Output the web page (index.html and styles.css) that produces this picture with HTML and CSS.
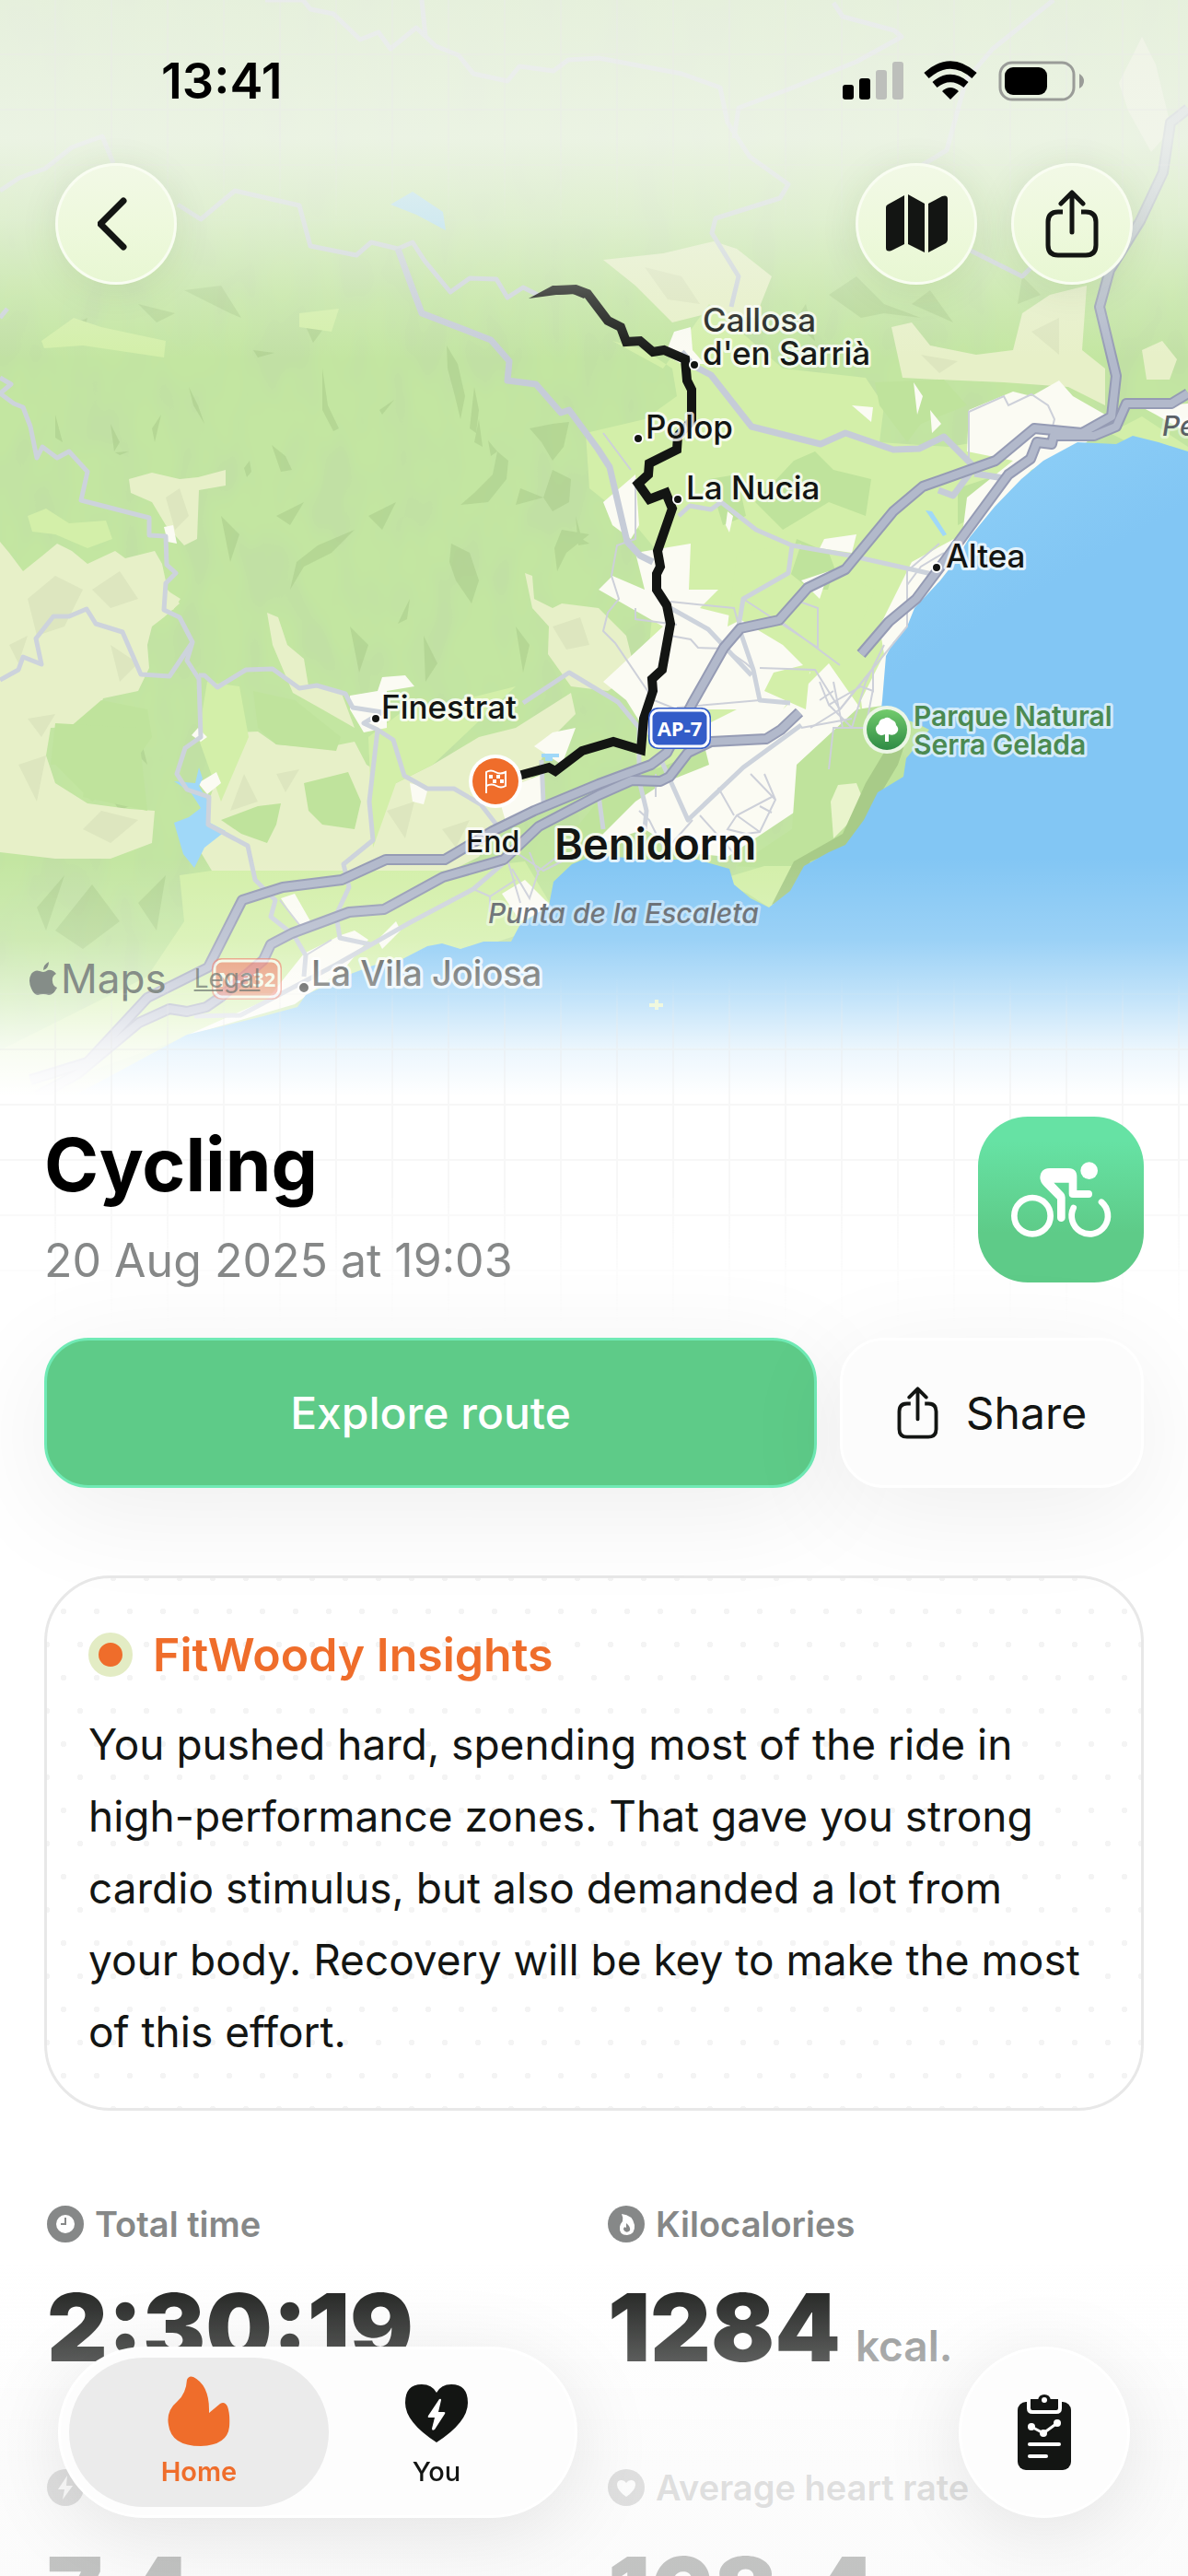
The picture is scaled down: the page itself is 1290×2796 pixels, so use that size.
FILE: index.html
```html
<!DOCTYPE html>
<html lang="en">
<head>
  <meta charset="utf-8">
  <title>Cycling</title>
  <meta name="viewport" content="width=device-width, initial-scale=1.0">
  <link rel="stylesheet" href="styles.css">
</head>
<body>
  <!-- shared icons -->
  <svg class="defs" width="0" height="0" aria-hidden="true">
    <symbol id="i-share" viewBox="0 0 58 74">
      <g fill="none" stroke="currentColor" stroke-width="5" stroke-linecap="round" stroke-linejoin="round">
        <path d="M19 24H14Q3 24 3 35V60Q3 71 14 71H44Q55 71 55 60V35Q55 24 44 24H39" stroke-linecap="butt"/>
        <path d="M29 46V4M17 15L29 3L41 15"/>
      </g>
    </symbol>
    <symbol id="i-bolt" viewBox="0 0 20 36">
      <path d="M13 1L1 19Q0 21 2 21H8L5 33Q5 36 8 34L19 17Q20 15 18 15H12L15 2Q15 0 13 1Z" fill="currentColor"/>
    </symbol>
  </svg>

  <div class="app">
    <header class="map">
      <svg class="map-svg" viewBox="0 0 1290 1200" role="img" aria-label="Map of the route">
        <defs>
          <linearGradient id="sea" x1="0" y1="0" x2="1" y2="1">
            <stop offset="0.1" stop-color="#a3daf9"/>
            <stop offset="0.4" stop-color="#8fd0f7"/>
            <stop offset="0.55" stop-color="#82c6f4"/>
          </linearGradient>
          <linearGradient id="pin" x1="0" y1="0" x2="0" y2="1">
            <stop offset="0" stop-color="#72cb6c"/>
            <stop offset="1" stop-color="#2f8b45"/>
          </linearGradient>
          <filter id="relief" x="0" y="0" width="100%" height="100%">
            <feTurbulence type="fractalNoise" baseFrequency="0.026 0.012" numOctaves="2" seed="8"/>
            <feColorMatrix values="0 0 0 0 0.5  0 0 0 0 0.65  0 0 0 0 0.4  2.4 0 0 0 -0.8"/>
            <feComponentTransfer><feFuncA type="discrete" tableValues="0 0.04 0.08 0.12 0.18 0.24 0.3"/></feComponentTransfer>
          </filter>
        </defs>

        <!-- hills -->
        <rect width="1290" height="1200" fill="#c3e6a1"/>
        <rect width="1290" height="1200" filter="url(#relief)"/>
        <g fill="#a3c584" fill-opacity="0.45">
          <path d="M485 375L497 395L505 430L500 455L494 430L486 400Z"/>
          <path d="M515 420L520 445L517 470L510 465Z M520 455L524 485L515 480Z M530 478L540 490L533 495Z"/>
          <path d="M540 490L552 500L550 520L530 545L500 548L515 535L535 515Z"/>
          <path d="M575 465L600 460L618 458L612 485L600 500L588 480Z"/>
          <path d="M295 483L310 495L317 510L305 512Z M271 500L273 512L268 518L265 508Z"/>
          <path d="M412 445L428 434L415 450Z M350 400L356 440L368 465L362 468L350 445Z"/>
          <path d="M385 575L360 600L330 615L315 640L322 610L345 592Z"/>
          <path d="M440 660L445 650L442 672L432 677Z M205 420L215 440L222 460L210 440Z"/>
          <path d="M490 590L510 600L520 630L512 655L495 630L488 610Z"/>
          <path d="M600 510L620 520L618 545L600 555L590 540Z M565 530L590 540L560 548Z"/>
          <path d="M610 575L640 580L615 600L605 620L602 595Z M625 560L632 585L640 590L628 592Z"/>
          <path d="M165 465L175 450L168 480Z M60 450L68 480L60 475Z M120 460L130 480L124 490Z"/>
          <path d="M275 380L298 383L280 388Z M125 491L140 490L130 494Z"/>
          <path d="M230 330L200 315L240 310L262 345L250 340Z M330 350L360 345L340 372Z"/>
          <path d="M60 360L95 345L90 365Z M150 330L190 340L170 350Z"/>
          <path d="M900 320L930 300L960 330L1000 345L960 340L935 345Z M990 330L1010 315L1035 350Z"/>
          <path d="M815 440L830 400L840 460Z M875 330L885 370L862 350Z M1110 300L1130 320L1105 330Z"/>
          <path d="M60 1010L100 960L130 1000L90 1030Z M40 985L70 950L50 1010Z M150 980L180 950L170 1010Z"/>
          <path d="M110 850L130 835L150 870L130 880Z M130 800L150 790L160 830Z M305 780L340 800L320 815Z"/>
          <path d="M380 680L400 700L390 730Z M460 690L475 720L462 740Z M560 680L575 700L568 730Z"/>
          <path d="M240 560L260 580L250 610Z M300 560L330 545L315 570Z M400 560L430 545L415 575Z"/>
        </g>

        <!-- dry land -->
        <g fill="#e7f0c8">
          <path d="M0 588L10 600L25 620L45 604L62 590L78 598L95 612L125 598L136 606L168 598L176 612L182 640L195 655L178 670L165 680L160 700L162 725L150 750L112 758L100 788L55 790L50 820L60 850L95 872L140 878L168 880L165 915L120 932L60 932L0 925Z"/>
          <path d="M140 520L165 513L195 520L215 518L245 510V527L216 532L214 585L200 592L180 570L165 545L142 535Z"/>
          <path d="M230 860L255 795L280 794L300 808L350 812L385 805L398 830L430 850L470 830L520 800L560 790L620 752L625 775L600 800L580 840L520 930L490 945L400 955L350 960L290 965L230 945L212 915Z"/>
          <path d="M290 665L302 670L312 700L330 715L335 745L370 750L385 790L350 770L318 752L296 700Z"/>
          <path d="M570 622L578 625L580 650L600 660L610 655L650 660L680 690L690 730L660 750L620 745L595 710L596 680L578 660Z"/>
          <path d="M655 282L720 275L775 262L800 270L838 300L820 345L770 340L730 350L690 310Z"/>
          <path d="M968 355L990 350L1010 375L1060 385L1100 380L1110 340L1140 320L1180 310L1175 380L1200 400L1200 440L1160 420L1090 415L1020 412L980 410Z"/>
          <path d="M1240 380L1262 370L1278 390L1270 412L1245 412Z"/>
          <path d="M1240 40L1255 70L1272 140L1250 165L1225 120L1215 90Z"/>
          <path d="M160 650L180 640L196 650L188 662Z"/>
        </g>
        <!-- relief on the dry land -->
        <g fill="#dde6bf">
          <path d="M30 650L60 625L90 640L70 680L40 690Z M100 640L130 620L150 650L120 660Z M10 700L30 690L20 720Z M120 700L150 720L130 740Z"/>
          <path d="M90 900L110 880L150 890L120 915Z M20 830L50 820L40 870Z M30 780L60 775L45 800Z"/>
          <path d="M180 540L195 530L205 560L190 575Z M250 880L265 840L280 870Z M420 880L450 870L440 910Z M300 840L325 835L310 860Z M480 900L510 890L495 920Z"/>
          <path d="M600 680L630 670L640 700L615 705Z M1000 385L1040 392L1020 405Z M1120 360L1150 345L1150 385Z M700 290L740 300L760 330L725 325Z"/>
        </g>
        <g fill="#d3efa9">
          <path d="M45 370L80 345L110 355L180 370L178 388L90 375L48 378Z"/>
          <path d="M325 340L368 335L360 360L325 355Z"/>
          <path d="M30 560L50 552L75 568L115 565L122 585L95 595L60 580L35 577Z"/>
          <path d="M665 370L720 400L770 330L850 400L940 410L960 440L955 480L1030 485L1060 480L1180 470L1110 520L1040 600L970 720L955 780L860 880L780 930L700 850L690 820L705 700L715 600L690 570L640 530L636 470L700 455L735 430L730 400L700 380Z"/>
          <path d="M195 950L230 945L480 945L570 935L600 985L562 1015L500 1035L380 1065L190 1130L90 1165L0 1195V1140L160 1060L200 1000Z"/>
          <path d="M225 740L260 745L270 800L240 870L215 800Z"/>
          <path d="M400 800L440 770L500 760L560 745L470 830L430 850L405 920Z"/>
          <path d="M1205 470L1240 452L1290 485V500L1235 485Z"/>
        </g>
        <!-- woods -->
        <g fill="#bfe39c">
          <path d="M862 500L885 490L905 510L946 520L940 560L900 545L850 575L820 545Z"/>
          <path d="M865 585L900 600L915 640L880 640L855 620Z"/>
          <path d="M950 415L1025 412L1050 440L1000 460L985 480L955 440Z"/>
          <path d="M770 520L800 515L810 560L785 570Z"/>
          <path d="M75 790L110 760L160 770L165 800L130 850L100 870L60 830Z"/>
          <path d="M60 785L150 790L160 880L90 865L95 830L55 830Z"/>
          <path d="M275 750L320 760L370 800L365 815L300 808L280 790Z"/>
          <path d="M240 890L280 875L305 872L300 895L290 915L262 905Z"/>
          <path d="M330 850L378 838L392 870L385 900L350 895L335 880Z"/>
          <path d="M665 850L725 830L790 800L830 840L770 880L700 880L660 940L600 930Z"/>
          <path d="M1040 530L1085 515L1060 560L1040 570Z"/>
        </g>
        <!-- built-up land -->
        <g fill="#fbfbf3">
          <path d="M1052 445L1100 425L1120 430L1150 413L1165 430L1200 450L1180 480L1120 510L1075 560L1040 620L1000 670L975 720L975 780L960 880L940 800L935 760L960 710L955 680L990 610L1045 580L1050 540L1100 500L1050 490Z"/>
          <path d="M690 600L750 590L748 640L780 640L760 660L800 670L850 700L880 730L850 770L820 800L900 720L935 770L950 800L880 870L790 930L740 925L700 900L640 920L690 870L720 850L770 830L760 790L800 770L740 770L705 800L680 760L655 740L720 680L650 640L665 625L700 640Z"/>
          <path d="M655 545L690 515L694 570L685 585L665 570Z"/>
          <path d="M732 360L750 355L752 380L765 395L740 395L722 385Z"/>
          <path d="M925 440L948 442L946 458Z M992 415L1002 430L996 450Z M1010 445L1022 460L1012 470Z"/>
          <path d="M380 755L410 750L415 735L440 733L450 745L420 750L420 790L395 795L380 770Z"/>
          <path d="M215 790L225 800L218 805L208 798Z M215 850L235 838L240 850L225 862Z"/>
          <path d="M445 850L465 855L460 873L448 870Z M540 860L590 840L590 875L550 895Z M580 810L600 795L625 790L610 830Z"/>
          <path d="M305 975L320 970L340 1005L325 1005Z M330 1035L370 1015L385 1010L400 1020L375 1050L320 1090L200 1125L290 1085Z"/>
          <path d="M545 970L570 955L600 985L565 1000Z M410 1020L430 1000L435 1010L415 1030Z"/>
          <path d="M178 572L188 570L192 590L182 588Z"/>
          <path d="M790 555L796 560L792 578L788 570Z M895 585L930 580L925 600L890 595Z M870 630L900 620L890 650Z"/>
          <path d="M1240 442L1290 438V470L1255 450Z"/>
        </g>
        <g fill="#bfe39c">
          <path d="M800 600L870 590L850 650L790 680Z M840 730L880 720L875 770L830 750Z M905 620L950 640L930 690L890 670Z" fill="#d3efa9"/>
          <path d="M865 830L930 770L965 765L975 800L985 830L975 860L950 880L930 930L870 945L800 940L860 900Z"/>
          <path d="M780 955L830 940L870 940L855 970L835 985L812 970Z" fill="#d3efa9"/>
          <path d="M910 852L930 850L938 870L925 890L905 910L902 870Z" fill="#e9f4cc"/>
          <path d="M985 800L975 830L945 880L930 915L880 935L855 975L838 982L862 935L915 905L940 850L970 800Z" fill="#a8cb88"/>
        </g>

        <!-- sea and lakes -->
        <path fill="url(#sea)" d="M1290 490L1258 480L1230 473L1212 482L1170 480L1133 500L1109 520L1080 550L1053 583L1035 612L1021 630L993 660L985 680L970 697L962 712L958 760L956 778L975 778L995 785L1009 792L995 810L984 823L981 843L953 860L938 890L918 917L900 925L873 940L858 967L835 985L815 975L797 960L792 943L757 933L702 933L646 928L621 938L601 957L596 983L565 1003L555 1022L525 1022L500 1030L480 1024L464 1027L435 1042L405 1048L373 1060L332 1080L323 1093L286 1103L245 1113L203 1123L153 1150L116 1170L60 1200H1290Z"/>
        <path d="M705 1089h6v-4h4v4h5v4h-5v3h-4v-3h-6z" fill="#dcefb5"/>
        <path fill="#a0d8f8" d="M216 833L220 845L216 853L226 870L228 893L245 902L222 920L211 942L199 927L189 893L205 887L218 877L207 860L189 848L212 850ZM424 222L448 208L481 230L484 250L452 233ZM1005 554L1012 555L1028 580L1024 582ZM588 818H607V822H600V826H592V822H588Z"/>

        <!-- streets -->
        <g fill="none" stroke="#cdd0d9" stroke-width="2">
          <path d="M1052 500V447L1090 430L1095 440L1120 428L1138 440L1145 455L1140 475"/>
          <path d="M655 470L685 510M690 520V585L670 592L664 625L672 650L660 665L655 685L668 698L710 760L735 770"/>
          <path d="M728 653L797 660L803 682M690 660V672L735 678M728 690L750 694L758 703L788 704M786 703L810 720L818 727M807 650L888 703V660L860 650M846 673L912 722M825 725L885 727L912 770M1020 590L985 620V680L912 770L880 790M1025 600L1000 615L985 635M735 768L825 760M768 770L740 800"/>
          <path d="M890 740L900 765L935 745L948 750V725L912 770M900 765L925 790H940L948 748M905 740L915 790M870 790L925 780M890 760L905 750M960 700L940 740L925 790L905 790L900 835"/>
          <path d="M838 865L800 885L790 900L810 905L825 903L842 868L830 840M815 840L842 868M800 885L825 903M825 875L838 882M760 885L805 935M752 890L730 915M694 880L705 890L720 920M780 855L797 885M712 840V865"/>
          <path d="M551 933L565 980M556 943L575 975L585 945L605 930M560 925L590 945L620 930M575 925L585 950M514 965L532 973L560 955M532 973V990M304 977L330 1010M332 1037L360 1020"/>
        </g>
        <g fill="none" stroke="#cdd3dc" stroke-width="5" stroke-linejoin="round">
          <path d="M8 335L0 345M0 410L12 417L0 427L15 438L25 442L33 463L40 497L46 485L62 497L75 490L95 512L88 543L162 562V581L180 582L181 613L191 622L180 633L178 662L195 670L209 697L203 717L216 737L218 800L201 812L192 840L203 857L227 865L226 895L269 918L277 955L299 977L294 995L319 1015L332 1037L330 1060"/>
          <path d="M0 738L20 727L25 713L45 721L39 693L58 669H75L94 661L104 677L133 686L153 732L184 734L209 697"/>
          <path d="M216 733H222L236 746L267 727L296 726L325 747L344 744L375 753L383 768L415 773L395 785L410 792L427 803L439 842L464 856H493L522 873L539 895"/>
          <path d="M410 792L401 870L405 912L373 938L379 963L365 993L369 1018L402 1025"/>
          <path d="M568 763L618 730L671 762L694 790V847L702 880L700 900"/>
          <path d="M288 0H329L337 10L362 15L391 43L411 35L424 53L452 30L473 50L498 60L514 80L551 88L564 72L601 77L617 65L650 63L740 80L782 95L790 133L814 170L856 200L847 215L777 237L773 253L802 300L794 333M458 0L462 40"/>
          <path d="M0 207L21 193L49 183L78 160L111 148L123 177M193 222L218 238L255 207L325 223L337 267L387 277L403 263L432 270L448 263L461 283L489 317L510 302L539 303L551 323L568 312L584 320"/>
          <path d="M1144 0L1078 53L1049 87L1028 163L1000 180M905 3L915 18L971 33L979 40L930 67L856 97L802 117L797 150M1050 270L1110 300L1120 290"/>
          <path d="M737 560L749 549L772 553L783 545L821 575L860 592L923 603L1012 623M860 592L856 622L807 650L802 680L818 727L825 760L858 763"/>
          <path d="M870 787L807 833L747 890L717 823M728 660L769 683L816 733M588 825L590 870M650 863L655 900"/>
          <path d="M551 933L514 965L444 1002L365 1047L261 1102L211 1103"/>
        </g>
        <g fill="none" stroke="#c6ccd8" stroke-width="7" stroke-linejoin="round">
          <path d="M432 270L443 300L458 340L533 369L553 392L551 413L582 417L609 448L618 445L649 487L662 507L676 567L681 588L695 603L709 610"/>
          <path d="M740 382L753 397L772 407L816 463L891 482L918 470L970 488L998 487L1025 474L1044 493L1058 507L1035 538L1019 532M1058 514L1090 519"/>
        </g>

        <!-- motorways -->
        <g fill="none" stroke="#959bb4" stroke-width="12" stroke-linejoin="round">
          <path id="ap7" d="M33 1172L95 1153L160 1083L226 1050L263 977L307 963L371 955L419 933H483L535 902L580 880L650 851L707 830L724 817L752 763L786 703L804 682L846 673L877 638L918 618L970 555L1002 528L1081 500L1123 465L1175 470L1207 452L1212 408L1194 333L1205 293L1238 240L1263 187L1271 133L1290 118"/>
          <path id="n332" d="M40 1190L85 1165L151 1110L184 1095L203 1098L224 1093L240 1082L286 1042L294 1025L317 1013L379 990L417 987L481 952L547 933L585 897L650 863L686 847L717 848L727 843L747 817L772 805L832 802L848 792L868 773"/>
          <path id="coast" d="M935 710L965 675L995 650L1025 610L1095 515L1119 498L1126 480L1142 482L1144 473H1188L1212 463L1223 438H1272L1290 427"/>
        </g>
        <g fill="none" stroke="#b2b9cb" stroke-width="8" stroke-linejoin="round">
          <use href="#ap7"/>
          <use href="#n332"/>
          <use href="#coast"/>
        </g>

        <!-- recorded route -->
        <path fill="#131513" d="M574 324L600 310L626 310L640 315L634 324L622 319L604 320Z"/>
        <path fill="none" stroke="#131513" stroke-width="10" stroke-linejoin="miter" d="M604 315L625 314L638 319L660 348L674 355L680 371L695 370L709 382L721 380L744 390L746 413L751 423V457L736 473L735 488L705 503L704 515L693 525L705 542L723 535L730 552L714 598L717 615L713 623V640L724 657L728 677L719 727L708 737L709 750L699 780L696 814L666 805L632 815L603 837L596 833L563 842"/>

        <!-- road shields -->
        <rect x="704" y="768" width="68" height="45" rx="10" fill="#335cc8"/>
        <rect x="707" y="771" width="62" height="39" rx="8" fill="none" stroke="#fff" stroke-width="3"/>
        <text class="shield" x="738" y="799">AP-7</text>
        <g opacity="0.65">
          <rect x="230" y="1040" width="76" height="45" rx="10" fill="#ea4f36"/>
          <rect x="233" y="1043" width="70" height="39" rx="8" fill="none" stroke="#fff" stroke-width="3"/>
          <text class="shield" x="268" y="1071">N-332</text>
        </g>

        <!-- park -->
        <circle cx="963" cy="792" r="26" fill="#edf6e6"/>
        <circle cx="963" cy="792" r="22" fill="url(#pin)"/>
        <path fill="#fff" d="M961 805V797Q955 800 952 795Q949 789 954 786Q955 780 960 780Q964 777 968 781Q973 783 973 787Q977 791 974 795Q971 799 965 797V805Z"/>

        <!-- end marker -->
        <circle cx="538" cy="848" r="29" fill="#fff"/>
        <circle cx="538" cy="848" r="25" fill="#ef6d2b"/>
        <g fill="none" stroke="#fff" stroke-width="2">
          <path d="M528 861V838Q533 835 538 838T549 838V853Q544 856 539 853T528 853"/>
          <path d="M531 841h4v4h-4zM539 841h4v4h-4zM535 846h4v4h-4zM543 846h4v4h-4z" fill="#fff" stroke="none"/>
        </g>

        <g fill="#131513" stroke="#fff" stroke-width="2">
          <circle cx="754" cy="396" r="5"/>
          <circle cx="693" cy="476" r="5"/>
          <circle cx="736" cy="542" r="5"/>
          <circle cx="1017" cy="616" r="5"/>
          <circle cx="408" cy="780" r="5"/>
          <circle cx="330" cy="1072" r="6"/>
        </g>
        <g class="places">
          <text x="763" y="360">Callosa</text>
          <text x="763" y="396">d'en Sarrià</text>
          <text x="701" y="476">Polop</text>
          <text x="745" y="542">La Nucia</text>
          <text x="1027" y="616">Altea</text>
          <text x="414" y="780">Finestrat</text>
          <text class="end" x="506" y="925">End</text>
          <text class="city" x="602" y="933">Benidorm</text>
          <text class="cape" x="530" y="1002">Punta de la Escaleta</text>
          <text class="cape" x="1262" y="473">Penyal d'Ifac</text>
          <text class="park" x="992" y="788">Parque Natural</text>
          <text class="park" x="992" y="819">Serra Gelada</text>
          <text class="faded" x="338" y="1070">La Vila Joiosa</text>
        </g>
      </svg>
      <div class="map-fade"></div>
      <div class="map-credit">
        <svg width="30" height="36" viewBox="0 0 30 36" aria-hidden="true"><path fill="currentColor" d="M21 0Q21 7 15 9Q15 3 21 0ZM15 11Q17 11 20 9Q25 8 29 13Q24 16 25 21Q25 26 30 28Q26 36 21 36Q18 35 15 35T9 36Q5 36 2 29Q-2 20 2 13Q6 8 11 10Q14 11 15 11Z"/></svg>
        <span>Maps</span>
        <a href="#">Legal</a>
      </div>
    </header>
    <div class="grid-lines"></div>

    <main>
      <section class="title-row">
        <div class="title">
          <h1>Cycling</h1>
          <p>20 Aug 2025 at 19:03</p>
        </div>
        <div class="sport-icon">
          <svg viewBox="21 21 540 540" aria-hidden="true">
            <g fill="none" stroke="#fff" stroke-width="20" stroke-linecap="round">
              <circle cx="198" cy="344" r="59"/>
              <path d="M332 318A59 59 0 1 0 423 299"/>
            </g>
            <circle cx="383" cy="197" r="28" fill="#fff"/>
            <path fill="#fff" d="M255 189H315Q343 189 343 217V261H381A12 12 0 0 1 381 285H330Q317 285 317 272V236H268L300 270Q305 276 305 284V350A13 13 0 0 1 279 350V290L236 247Q223 233 223 219Q225 189 255 189Z"/>
          </svg>
        </div>
      </section>

      <div class="actions">
        <button class="btn btn-primary" type="button">Explore route</button>
        <button class="btn btn-share" type="button">
          <svg width="45" height="57" aria-hidden="true"><use href="#i-share"/></svg>
          Share
        </button>
      </div>

      <section class="insights">
        <h2><span class="dot"></span>FitWoody Insights</h2>
        <p>You pushed hard, spending most of the ride in high-performance zones. That gave you strong cardio stimulus, but also demanded a lot from your body. Recovery will be key to make the most of this effort.</p>
      </section>

      <section class="stats">
        <div class="stat">
          <h3>
            <svg viewBox="0 0 40 40" aria-hidden="true"><circle cx="20" cy="20" r="15" fill="none" stroke="currentColor" stroke-width="10"/><path d="M20 13V20H15" fill="none" stroke="currentColor" stroke-width="2"/></svg>
            Total time
          </h3>
          <p>2:30:19</p>
        </div>
        <div class="stat">
          <h3>
            <svg viewBox="0 0 40 40" aria-hidden="true"><circle cx="20" cy="20" r="20" fill="currentColor"/><path d="M15 9Q27 10 29 21Q30 31 21 32Q12 32 13 23Q14 19 16 17Q17 13 15 9Z" fill="#fff"/><path d="M20 19Q25 23 24 27Q20 31 17 26Q17 22 20 24Z" fill="currentColor"/></svg>
            Kilocalories
          </h3>
          <p>1284<small>kcal.</small></p>
        </div>
        <div class="stat">
          <h3>
            <svg viewBox="0 0 40 40" aria-hidden="true"><circle cx="20" cy="20" r="20" fill="currentColor"/><path d="M22 7L12 22H19L17 33L28 18H21Z" fill="#fff"/></svg>
            Effort
          </h3>
          <p>7.4</p>
        </div>
        <div class="stat">
          <h3>
            <svg viewBox="0 0 40 40" aria-hidden="true"><circle cx="20" cy="20" r="20" fill="currentColor"/><path d="M20 30Q10 23 10 17Q10 12 15 12Q18 12 20 15Q22 12 25 12Q30 12 30 17Q30 23 20 30Z" fill="#fff"/></svg>
            Average heart rate
          </h3>
          <p>168.4</p>
        </div>
      </section>
    </main>
  </div>

  <div class="bottom-fade"></div>

  <!-- status bar and map controls -->
  <div class="top">
    <div class="status">
      <time>13:41</time>
      <svg width="264" height="46" viewBox="0 0 264 46" aria-hidden="true">
        <rect x="2" y="27" width="12" height="16" rx="3"/>
        <rect x="20" y="20" width="12" height="23" rx="3"/>
        <g fill="#bdbfbb"><rect x="38" y="11" width="12" height="32" rx="3"/><rect x="56" y="2" width="12" height="41" rx="3"/></g>
        <path d="M119 43L110 34Q119 26 128 34Z"/>
        <g fill="none" stroke="#000" stroke-width="8"><path d="M102 27Q119 13 136 27"/><path d="M93 17Q119 -6 145 17"/></g>
        <rect x="173" y="3" width="80" height="40" rx="13" fill="none" stroke="#9a9c98" stroke-width="3"/>
        <rect x="178" y="8" width="46" height="30" rx="9"/>
        <path d="M259 15Q264 18 264 23T259 31Z" fill="#9a9c98"/>
      </svg>
    </div>
    <div class="controls">
      <button class="round" type="button" aria-label="Back">
        <svg width="40" height="60" viewBox="0 0 40 60" aria-hidden="true"><path d="M28 5L3 30L28 55" fill="none" stroke="currentColor" stroke-width="7" stroke-linecap="round" stroke-linejoin="round"/></svg>
      </button>
      <button class="round map-btn" type="button" aria-label="Map">
        <svg width="67" height="64" viewBox="0 0 67 64" aria-hidden="true"><path fill="currentColor" d="M20 1V54L6 61Q0 63 0 58V14Q0 12 2 11ZM24 0L42 10V63L24 54ZM46 10L61 2Q67 0 67 5V49Q67 51 65 53L46 63Z"/></svg>
      </button>
      <button class="round" type="button" aria-label="Share">
        <svg width="58" height="74" aria-hidden="true"><use href="#i-share"/></svg>
      </button>
    </div>
  </div>

  <!-- tab bar -->
  <nav class="bottom">
    <div class="tabs">
      <a class="tab active" href="#">
        <svg width="68" height="76" viewBox="0 0 68 76" aria-hidden="true"><path fill="currentColor" d="M21 4Q23-1 28 1Q46 10 45 40L57 30Q62 27 65 33Q68 41 67 55Q65 75 36 76Q4 76 1 53Q-2 38 11 27Q20 19 21 4Z"/></svg>
        Home
      </a>
      <a class="tab" href="#">
        <svg width="68" height="76" viewBox="0 0 68 76" aria-hidden="true"><path fill="currentColor" d="M34 72Q0 50 0 29Q0 9 18 9Q29 9 34 18Q39 9 50 9Q68 9 68 29Q68 50 34 72Z"/><use href="#i-bolt" x="23" y="24" width="22" height="36" color="#fff"/></svg>
        You
      </a>
    </div>
    <button class="log" type="button" aria-label="Activity log">
      <svg width="58" height="84" viewBox="0 0 58 84" aria-hidden="true">
        <rect y="9" width="58" height="74" rx="9" fill="currentColor"/>
        <path d="M12 6V16Q12 20 16 20H42Q46 20 46 16V6" fill="#131513" stroke="#fff" stroke-width="4"/>
        <path d="M15 9Q15 7 17 7H22Q23 1 29 1T36 7H41Q43 7 43 9V15Q43 17 41 17H17Q15 17 15 15Z" fill="#131513"/>
        <circle cx="29" cy="7" r="3" fill="#fff"/>
        <g fill="none" stroke="#fff" stroke-width="3"><path d="M15 36L28 43L43 32"/></g>
        <g fill="#fff"><circle cx="15" cy="36" r="4"/><circle cx="28" cy="43" r="4"/><circle cx="43" cy="32" r="4"/><rect x="11" y="53" width="36" height="4" rx="2"/><rect x="11" y="66" width="22" height="4" rx="2"/></g>
      </svg>
    </button>
  </nav>
</body>
</html>
```

FILE: styles.css
```css
* {
  box-sizing: border-box;
}
body {
  margin: 0;
  background: #fff;
  color: #131513;
  font-family: Inter, "Liberation Sans", sans-serif;
}
h1, h2, h3, p {
  margin: 0;
}
button {
  border: none;
  padding: 0;
  font-family: inherit;
  color: inherit;
  cursor: pointer;
}
svg {
  display: block;
}
.defs {
  position: absolute;
}

.app {
  position: relative;
  height: 100vh;
  overflow-y: auto;
  scrollbar-width: none;
}

/* Map */
.map {
  position: relative;
}
.map-svg {
  width: 100%;
}
.map-fade {
  position: absolute;
  inset: 0;
  background:
    linear-gradient(to bottom, rgba(242, 244, 240, 0.75) 0, rgba(243, 246, 240, 0.84) 150px, rgba(240, 245, 235, 0.62) 240px, rgba(240, 245, 235, 0.25) 320px, rgba(240, 245, 235, 0) 390px),
    linear-gradient(to top, #fff 0, #fff 10px, rgba(255, 255, 255, 0.85) 60px, rgba(255, 255, 255, 0.5) 120px, rgba(255, 255, 255, 0.2) 180px, rgba(255, 255, 255, 0) 270px);
}
.places text {
  font-size: 35px;
  font-weight: 500;
  fill: #131513;
  stroke: rgba(255, 255, 255, 0.8);
  stroke-width: 6px;
  stroke-linejoin: round;
  paint-order: stroke;
}
.places .end {
  font-size: 32px;
}
.places .city {
  font-size: 47px;
  font-weight: 600;
}
.places .cape {
  font-size: 30px;
  font-style: italic;
  fill: #5a6066;
  stroke: rgba(255, 255, 255, 0.45);
}
.places .park {
  font-size: 30px;
  font-weight: 600;
  fill: #4b8a52;
  stroke: rgba(225, 242, 250, 0.85);
}
.places .faded {
  font-size: 38px;
  fill: #3c413f;
}
.shield {
  font-family: "Open Sans", Inter, sans-serif;
  font-size: 22px;
  font-weight: 700;
  text-anchor: middle;
  fill: #fff;
}
.map-credit {
  position: absolute;
  left: 32px;
  bottom: 112px;
  display: flex;
  align-items: center;
  gap: 4px;
  color: #858d88;
  font-size: 44px;
  line-height: 52px;
}
.map-credit a {
  margin-left: 26px;
  color: rgba(110, 118, 112, 0.7);
  font-size: 28px;
}
.grid-lines {
  position: absolute;
  top: 0;
  left: 0;
  right: 0;
  height: 1440px;
  pointer-events: none;
  background:
    linear-gradient(to right, transparent 59px, #ebebeb 59px),
    linear-gradient(to bottom, transparent 58px, #ebebeb 58px);
  background-size: 61px 60px;
  opacity: 0.35;
  mask-image: linear-gradient(to bottom, #000 0, #000 150px, transparent 250px, transparent 1060px, #000 1120px, #000 1300px, transparent 1440px);
}

/* Status bar and round buttons over the map */
.top {
  position: absolute;
  top: 0;
  left: 0;
  right: 0;
}
.status {
  display: flex;
  justify-content: space-between;
  align-items: center;
  padding: 52px 113px 0 175px;
}
.status time {
  color: #000;
  font-size: 54px;
  font-weight: 600;
  line-height: 72px;
}
.controls {
  display: flex;
  gap: 37px;
  padding: 53px 60px 0;
}
.round {
  display: flex;
  align-items: center;
  justify-content: center;
  width: 132px;
  height: 132px;
  border: 3px solid rgba(250, 253, 243, 0.9);
  border-radius: 50%;
  background: linear-gradient(to bottom, #f2f9e6, #eef9dd 50%, #e8f7d3);
  box-shadow: 0 6px 40px rgba(60, 90, 30, 0.1);
}
.map-btn {
  margin-left: auto;
}

/* Title */
main {
  position: relative;
  padding: 12px 48px 0;
}
.title-row {
  display: flex;
  justify-content: space-between;
  align-items: flex-start;
}
.title h1 {
  color: #000;
  font-size: 80px;
  font-weight: 700;
  line-height: 104px;
}
.title p {
  margin-top: 22px;
  color: #868888;
  font-size: 50px;
  line-height: 60px;
}
.sport-icon {
  width: 180px;
  height: 180px;
  border-radius: 54px;
  background: linear-gradient(to bottom, #66e2a4 15%, #5ecb88 70%);
}

/* Action buttons */
.actions {
  display: flex;
  gap: 25px;
  margin-top: 54px;
}
.btn {
  display: flex;
  align-items: center;
  justify-content: center;
  gap: 30px;
  height: 163px;
  border-radius: 48px;
  font-size: 48px;
  font-weight: 500;
  box-shadow: 0 24px 120px rgba(0, 0, 0, 0.07);
}
.btn-primary {
  flex: 1;
  border: 3px solid #70eab5;
  background: #5ecb88;
  color: #fff;
}
.btn-share {
  width: 330px;
  border: 3px solid #fff;
  background: #fcfcfc;
  font-weight: 400;
}

/* Insights card */
.insights {
  margin-top: 95px;
  padding: 59px 45px 44px;
  border: 3px solid #e8e8e8;
  border-radius: 72px;
  background-color: #fff;
  background-image:
    radial-gradient(circle, #f4f4f4 3px, transparent 3px),
    radial-gradient(circle, #f4f4f4 3px, transparent 3px);
  background-size: 36px 72px;
  background-position: 0 0, 18px 36px;
}
.insights h2 {
  display: flex;
  align-items: center;
  gap: 22px;
  color: #ef6d2b;
  font-size: 50px;
  font-weight: 600;
  line-height: 48px;
}
.dot {
  width: 48px;
  height: 48px;
  border: 11px solid #e3ecc4;
  border-radius: 50%;
  background: #ef6d2b;
}
.insights p {
  margin-top: 34px;
  font-size: 46px;
  line-height: 78px;
}

/* Stats */
.stats {
  display: grid;
  grid-template-columns: 1fr 1fr;
  gap: 94px 24px;
  margin-top: 103px;
  padding-bottom: 260px;
}
.stat {
  padding-left: 3px;
}
.stat h3 {
  display: flex;
  align-items: center;
  gap: 12px;
  color: #868888;
  font-size: 38px;
  font-weight: 600;
  line-height: 40px;
}
.stat h3 svg {
  width: 40px;
  height: 40px;
}
.stat p {
  margin-top: 32px;
  font-size: 102px;
  font-weight: 900;
  line-height: 120px;
}
.stat small {
  margin-left: 16px;
  color: #868888;
  font-size: 46px;
  font-weight: 600;
  line-height: 1;
}

/* Bottom bar */
.bottom-fade {
  position: fixed;
  left: 0;
  right: 0;
  bottom: 0;
  height: 340px;
  pointer-events: none;
  background: linear-gradient(to bottom, rgba(251, 251, 251, 0), rgba(251, 251, 251, 0.32) 32%, rgba(251, 251, 251, 0.76) 64%, rgba(250, 250, 250, 0.76));
}
.bottom {
  position: fixed;
  left: 63px;
  right: 63px;
  bottom: 63px;
  display: flex;
  justify-content: space-between;
}
.tabs,
.log {
  height: 186px;
  border: 3px solid #fff;
  border-radius: 93px;
  background: #fdfdfd;
  box-shadow: 0 16px 90px rgba(0, 0, 0, 0.1);
}
.tabs {
  display: flex;
  padding: 9px;
}
.log {
  display: flex;
  align-items: center;
  justify-content: center;
  width: 186px;
}
.tab {
  display: flex;
  flex-direction: column;
  align-items: center;
  justify-content: center;
  gap: 10px;
  width: 282px;
  margin-right: -24px;
  border-radius: 81px;
  color: #131513;
  font-size: 29px;
  font-weight: 500;
  line-height: 36px;
  text-decoration: none;
}
.tab:last-child {
  margin-right: 0;
}
.tab.active {
  background: #ebebeb;
  color: #ef6d2b;
  font-weight: 600;
}
```
